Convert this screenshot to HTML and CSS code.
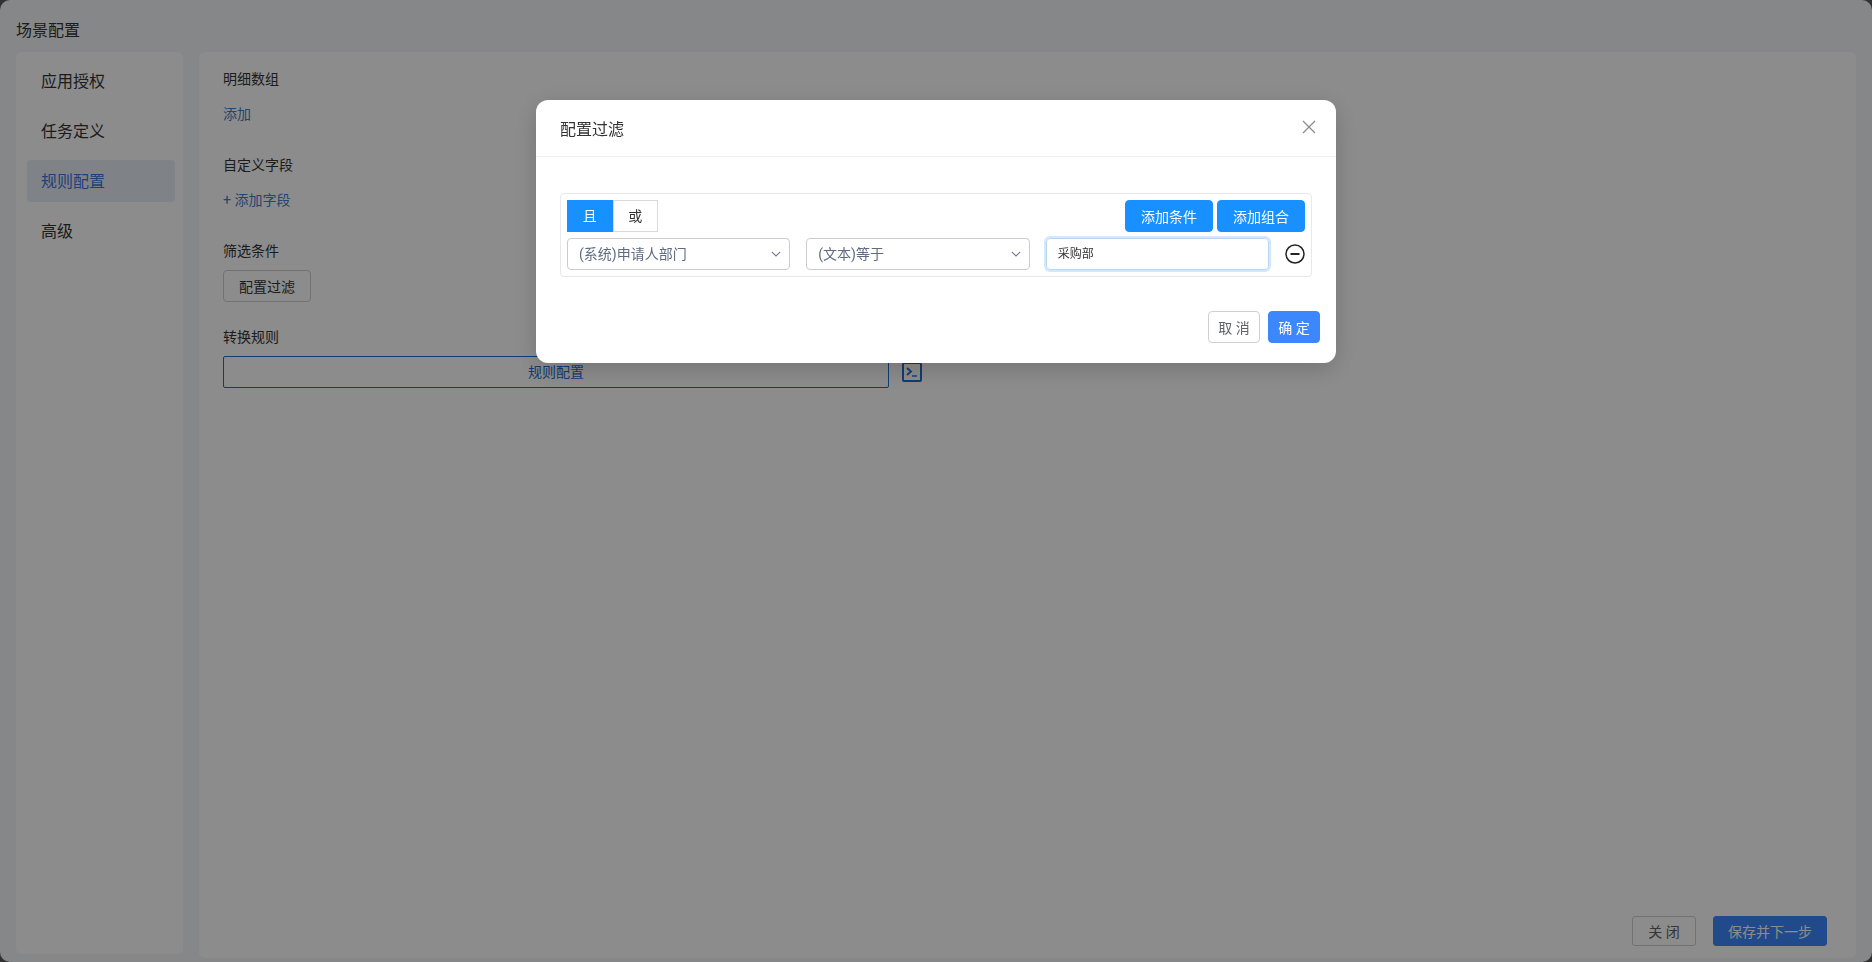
FILE: index.html
```html
<!DOCTYPE html>
<html lang="zh-CN">

<head>
    <meta charset="UTF-8">
    <title>场景配置</title>
    <link rel="stylesheet" href="styles.css">
</head>

<body>

    <div class="drawer">
        <div class="drawer_title">场景配置</div>
        <div class="drawer_body">
            <div class="side_menu">
                <div class="menu_item">应用授权</div>
                <div class="menu_item">任务定义</div>
                <div class="menu_item active">规则配置</div>
                <div class="menu_item">高级</div>
            </div>
            <div class="main_panel">
                <div class="main_content">
                    <div class="field_label">明细数组</div>
                    <div class="link_text">添加</div>
                    <div class="field_label">自定义字段</div>
                    <div class="link_text">+ 添加字段</div>
                    <div class="field_label">筛选条件</div>
                    <button class="btn btn_filter">配置过滤</button>
                    <div class="field_label">转换规则</div>
                    <div class="rule_row">
                        <button class="btn btn_rule">规则配置</button>
                        <svg class="terminal_icon" width="20" height="20" viewBox="0 0 20 20">
                            <rect x="1" y="1" width="18" height="18" rx="1" fill="none" stroke="#1b6fd0" stroke-width="2" />
                            <path d="M5 6l4 3.5-4 3.5" fill="none" stroke="#1b6fd0" stroke-width="1.8" />
                            <path d="M10 14h5" fill="none" stroke="#1b6fd0" stroke-width="1.4" />
                        </svg>
                    </div>
                </div>
                <div class="main_footer">
                    <button class="btn btn_close">关 闭</button>
                    <button class="btn btn_primary btn_save">保存并下一步</button>
                </div>
            </div>
        </div>
    </div>

    <div class="mask">
        <div class="modal">
            <div class="modal_header">
                <span class="modal_title">配置过滤</span>
                <svg class="close_icon" width="14" height="14" viewBox="0 0 14 14">
                    <path d="M1 1l12 12M13 1L1 13" fill="none" stroke="#8c8c8c" stroke-width="1.3" />
                </svg>
            </div>
            <div class="modal_body">
                <div class="filter_box">
                    <div class="filter_top">
                        <div class="logic_group">
                            <span class="logic_item selected">且</span>
                            <span class="logic_item">或</span>
                        </div>
                        <div class="filter_actions">
                            <button class="btn btn_add">添加条件</button>
                            <button class="btn btn_add">添加组合</button>
                        </div>
                    </div>
                    <div class="filter_row">
                        <div class="select_box">
                            <span class="select_text">(系统)申请人部门</span>
                            <svg width="10" height="6" viewBox="0 0 10 6">
                                <path d="M.8.8L5 5l4.2-4.2" fill="none" stroke="#6f7c91" stroke-width="1.1" />
                            </svg>
                        </div>
                        <div class="select_box">
                            <span class="select_text">(文本)等于</span>
                            <svg width="10" height="6" viewBox="0 0 10 6">
                                <path d="M.8.8L5 5l4.2-4.2" fill="none" stroke="#6f7c91" stroke-width="1.1" />
                            </svg>
                        </div>
                        <div class="text_input">采购部</div>
                        <svg class="minus_icon" width="20" height="20" viewBox="0 0 20 20">
                            <circle cx="10" cy="10" r="9" fill="none" stroke="#222" stroke-width="1.5" />
                            <path d="M5.5 10h9" fill="none" stroke="#222" stroke-width="2" />
                        </svg>
                    </div>
                </div>
            </div>
            <div class="modal_footer">
                <button class="btn btn_cancel">取 消</button>
                <button class="btn btn_primary btn_ok">确 定</button>
            </div>
        </div>
    </div>

</body>

</html>
```

FILE: styles.css
```css
* {
    margin: 0;
    padding: 0;
    box-sizing: border-box;
}

body {
    height: 100vh;
    overflow: hidden;
    background-color: #5a5a5a;
    font-family: Roboto, "Noto Sans CJK SC", sans-serif;
    font-size: 14px;
    color: #333;
}

.btn {
    font-family: inherit;
    font-size: 14px;
    border-radius: 4px;
    background-color: #fff;
    color: #333;
    border: 1px solid #d0d0d0;
}

.btn_primary {
    background-color: #3d87fc;
    border-color: #3d87fc;
    color: #fff;
}

.drawer {
    height: 100%;
    display: flex;
    flex-direction: column;
    background-color: #f4f6f9;
    border-radius: 10px;
}

.drawer_title {
    height: 52px;
    padding: 20px 16px 0;
    font-size: 16px;
    line-height: 22px;
}

.drawer_body {
    flex: 1;
    display: flex;
    gap: 16px;
    padding: 0 16px 4px;
    min-height: 0;
}

.side_menu {
    width: 167px;
    margin-bottom: 4px;
    padding: 8px 8px 8px 11px;
    background-color: #fff;
    border-radius: 6px;
}

.menu_item {
    height: 42px;
    margin-bottom: 8px;
    padding-left: 14px;
    font-size: 16px;
    line-height: 44px;
    border-radius: 4px;
}

.menu_item.active {
    background-color: #e8eef8;
    color: #3d77d8;
}

.main_panel {
    flex: 1;
    display: flex;
    flex-direction: column;
    background-color: #fff;
    border-radius: 6px;
}

.main_content {
    flex: 1;
    padding: 17px 24px 0;
}

.field_label {
    height: 20px;
    line-height: 20px;
    margin-bottom: 15px;
}

.link_text {
    height: 20px;
    line-height: 20px;
    margin-bottom: 31px;
    color: #3f80c8;
}

.btn_filter {
    display: block;
    width: 88px;
    height: 32px;
    margin: -6px 0 25px;
}

.rule_row {
    display: flex;
    align-items: center;
    gap: 13px;
    margin-top: -6px;
}

.btn_rule {
    width: 666px;
    height: 32px;
    padding-bottom: 2px;
    border-color: #1b6fd0;
    border-radius: 2px;
    color: #1b6fd0;
}

.main_footer {
    display: flex;
    justify-content: flex-end;
    gap: 17px;
    padding: 0 29px 12px 0;
}

.btn_close {
    width: 64px;
    height: 30px;
    border-radius: 3px;
    color: #606266;
}

.btn_save {
    width: 114px;
    height: 30px;
    border-radius: 3px;
}

.mask {
    position: fixed;
    top: 0;
    left: 0;
    width: 100%;
    height: 100%;
    display: flex;
    justify-content: center;
    align-items: flex-start;
    padding-top: 100px;
    background-color: rgba(0, 0, 0, 0.45);
}

.modal {
    width: 800px;
    height: 263px;
    background-color: #fff;
    border-radius: 12px;
    box-shadow: 0 6px 24px rgba(0, 0, 0, 0.18);
}

.modal_header {
    height: 57px;
    display: flex;
    justify-content: space-between;
    align-items: center;
    padding: 0 20px 0 24px;
    border-bottom: 1px solid #f0f0f0;
}

.modal_title {
    font-size: 16px;
    color: #333;
}

.close_icon {
    margin-top: -3px;
}

.modal_body {
    padding: 36px 24px 0;
}

.filter_box {
    height: 84px;
    padding: 6px;
    border: 1px solid #e8e8e8;
    border-radius: 4px;
}

.filter_top {
    display: flex;
    justify-content: space-between;
    margin-bottom: 6px;
}

.logic_group {
    display: flex;
}

.logic_item {
    width: 45.5px;
    height: 32px;
    line-height: 30px;
    text-align: center;
    border: 1px solid #d9d9d9;
}

.logic_item.selected {
    background-color: #1890ff;
    border-color: #1890ff;
    color: #fff;
}

.filter_actions {
    display: flex;
    gap: 4px;
}

.btn_add {
    width: 88px;
    height: 32px;
    background-color: #1890ff;
    border-color: #1890ff;
    color: #fff;
}

.filter_row {
    display: grid;
    grid-template-columns: 1fr 1fr 1fr 20px;
    align-items: center;
    gap: 16px;
}

.select_box {
    height: 32px;
    display: flex;
    justify-content: space-between;
    align-items: center;
    padding: 0 8px 0 11px;
    border: 1px solid #ccc;
    border-radius: 4px;
    color: #5f6b80;
}

.select_text {
    padding-bottom: 2px;
}

.text_input {
    height: 32px;
    padding-left: 11px;
    line-height: 30px;
    font-size: 12px;
    color: #333;
    border: 1px solid #bcd6ef;
    border-radius: 4px;
    box-shadow: 0 0 0 2px rgba(24, 144, 255, 0.2);
}

.modal_footer {
    display: flex;
    justify-content: flex-end;
    gap: 8px;
    padding: 34px 16px 0 0;
}

.btn_cancel,
.btn_ok {
    width: 52px;
    height: 32px;
}

.btn_cancel {
    color: #606266;
}
```
